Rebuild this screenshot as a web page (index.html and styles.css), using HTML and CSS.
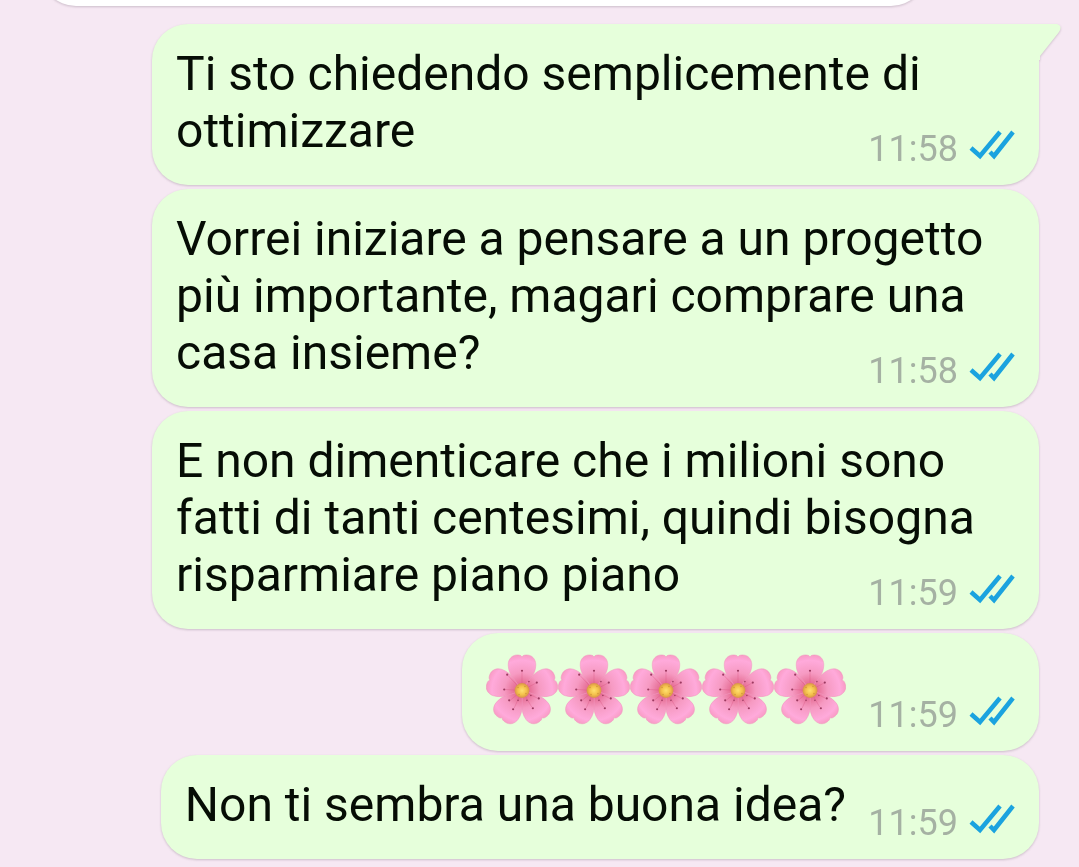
FILE: index.html
```html
<!DOCTYPE html>
<html lang="it">
<head>
  <meta charset="UTF-8">
  <meta name="viewport" content="width=device-width, initial-scale=1.0">
  <title>Chat</title>
  <link rel="stylesheet" href="styles.css">
</head>
<body>
  <svg class="defs" aria-hidden="true">
    <defs>
      <radialGradient id="petalFill" gradientUnits="userSpaceOnUse" cx="0" cy="0" r="36">
        <stop offset="0" stop-color="#dd5580"/>
        <stop offset="0.25" stop-color="#e8759c"/>
        <stop offset="0.5" stop-color="#f69ac2"/>
        <stop offset="0.85" stop-color="#ffaadb"/>
        <stop offset="1" stop-color="#f99cc6"/>
      </radialGradient>
      <radialGradient id="coreFill">
        <stop offset="0" stop-color="#ffe070"/>
        <stop offset="0.6" stop-color="#f3c04a"/>
        <stop offset="1" stop-color="#d9934a"/>
      </radialGradient>
      <path id="petal" d="M0 0L-9 -12C-12 -16 -14 -21 -14 -26C-14 -32 -10 -36 -5 -36C-3 -36 -1 -36 0 -34C1 -36 3 -36 5 -36C10 -36 14 -32 14 -26C14 -21 12 -16 9 -12Z" fill="url(#petalFill)" stroke="#f094bd" stroke-width="0.5"/>
      <symbol id="flower" viewBox="-36 -37 72 72">
        <use href="#petal"/>
        <use href="#petal" transform="rotate(72)"/>
        <use href="#petal" transform="rotate(144)"/>
        <use href="#petal" transform="rotate(216)"/>
        <use href="#petal" transform="rotate(288)"/>
        <path d="M0 0V-19M0 0L-14 -15M0 0L15 -8M0 0L-17 -1M0 0L16 8M0 0L-12 10M0 0L-8 18M0 0L10 17" stroke="#d54c7b" stroke-width="0.8" opacity="0.4"/>
        <g fill="#9c3a60">
          <circle cx="0" cy="-20" r="1.1"/>
          <circle cx="-15" cy="-16" r="1.1"/>
          <circle cx="15" cy="-8" r="1.1"/>
          <circle cx="-18" cy="-1" r="1.1"/>
          <circle cx="17" cy="8" r="1.1"/>
          <circle cx="-13" cy="10" r="1.1"/>
          <circle cx="-9" cy="19" r="1.1"/>
          <circle cx="11" cy="18" r="1.1"/>
          <circle cx="7" cy="-9" r="0.8"/>
          <circle cx="9" cy="5" r="0.8"/>
          <circle cx="-4" cy="10" r="0.8"/>
          <circle cx="5" cy="10" r="0.8"/>
        </g>
        <circle r="7.5" fill="url(#coreFill)"/>
        <g fill="#d39a3c">
          <circle cx="-4" cy="-3" r="0.8"/>
          <circle cx="3" cy="-4" r="0.8"/>
          <circle cx="4" cy="3" r="0.8"/>
          <circle cx="-3" cy="4" r="0.8"/>
        </g>
      </symbol>
      <symbol id="checks" viewBox="0 0 46 30">
        <path d="M2 18L11 26L31 2M21 22L25 26L44 2" fill="none" stroke="#1ba3df" stroke-width="4.5"/>
      </symbol>
    </defs>
  </svg>

  <main class="chat">
    <div class="message incoming"></div>

    <div class="message outgoing first">
      <p class="text">Ti sto chiedendo semplicemente di ottimizzare</p>
      <div class="meta"><time>11:58</time><svg class="checks" role="img" aria-label="Letto"><use href="#checks"/></svg></div>
      <svg class="tail" viewBox="0 0 24 36" aria-hidden="true"><path d="M0 0H19Q25 2 21 8L2 32V36H0Z" fill="#e6ffdb"/></svg>
    </div>

    <div class="message outgoing">
      <p class="text">Vorrei iniziare a pensare a un progetto più importante, magari comprare una casa insieme?</p>
      <div class="meta"><time>11:58</time><svg class="checks" role="img" aria-label="Letto"><use href="#checks"/></svg></div>
    </div>

    <div class="message outgoing">
      <p class="text">E non dimenticare che i milioni sono fatti di tanti centesimi, quindi bisogna risparmiare piano piano</p>
      <div class="meta"><time>11:59</time><svg class="checks" role="img" aria-label="Letto"><use href="#checks"/></svg></div>
    </div>

    <div class="message outgoing">
      <div class="text flowers">
        <svg class="flower" role="img" aria-label="Fiore"><use href="#flower"/></svg>
        <svg class="flower" role="img" aria-label="Fiore"><use href="#flower"/></svg>
        <svg class="flower" role="img" aria-label="Fiore"><use href="#flower"/></svg>
        <svg class="flower" role="img" aria-label="Fiore"><use href="#flower"/></svg>
        <svg class="flower" role="img" aria-label="Fiore"><use href="#flower"/></svg>
      </div>
      <div class="meta"><time>11:59</time><svg class="checks" role="img" aria-label="Letto"><use href="#checks"/></svg></div>
    </div>

    <div class="message outgoing">
      <p class="text">Non ti sembra una buona idea?</p>
      <div class="meta"><time>11:59</time><svg class="checks" role="img" aria-label="Letto"><use href="#checks"/></svg></div>
    </div>
  </main>
</body>
</html>
```

FILE: styles.css
```css
* {
  box-sizing: border-box;
}
body {
  margin: 0;
  font-family: Roboto, "Liberation Sans", sans-serif;
  background-color: #f6e8f3;
  color: #060d05;
}
.defs {
  position: absolute;
  width: 0;
  height: 0;
}
.chat {
  display: flex;
  flex-direction: column;
  align-items: flex-end;
  gap: 4px;
  padding: 0 40px 7px;
  overflow: hidden;
}
.message {
  display: grid;
  max-width: 887px;
  border-radius: 36px;
  filter: drop-shadow(0 1px 1px rgba(80, 60, 80, 0.25));
}
/* the previous message, scrolled almost out of view */
.incoming {
  align-self: flex-start;
  width: 100%;
  height: 104px;
  margin-top: -98px;
  margin-bottom: 14px;
  background-color: #fff;
}
.outgoing {
  position: relative;
  padding: 21px 24px 25px;
  background-color: #e6ffdb;
}
.first {
  border-top-right-radius: 0;
}
.tail {
  position: absolute;
  top: 0;
  left: 100%;
  width: 24px;
  height: 36px;
  margin-left: -1px;
}
.text,
.meta {
  grid-area: 1 / 1;
}
.text {
  margin: 0 0 1px;
  font-size: 48px;
  line-height: 57px;
}
/* keeps the last line clear of the time */
.text::after {
  content: "";
  display: inline-block;
  width: 169px;
}
.flowers {
  display: flex;
}
.flower {
  width: 72px;
  height: 71px;
}
.meta {
  display: flex;
  align-items: flex-end;
  align-self: end;
  justify-self: end;
  gap: 11px;
  color: #a5b1a3;
  font-size: 36px;
  line-height: 22px;
}
.checks {
  width: 46px;
  height: 30px;
}
```
